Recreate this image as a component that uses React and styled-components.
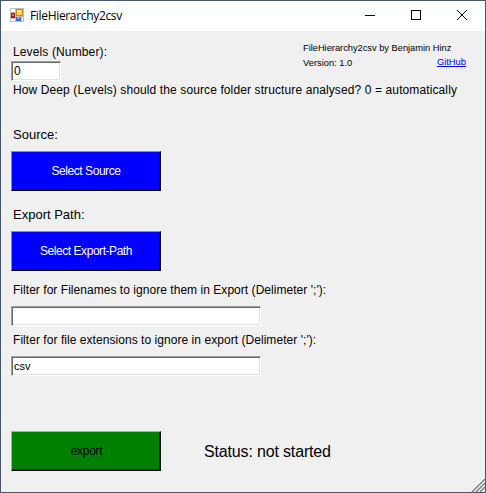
import React from "react";
import styled, { createGlobalStyle } from "styled-components";

const GlobalStyle = createGlobalStyle`
  * { box-sizing: border-box; }
  body { margin: 0; background: #f0f0f0; font-family: "Liberation Sans", Arial, sans-serif; }
`;

const Window = styled.div`
  width: 486px;
  height: 493px;
  display: flex;
  flex-direction: column;
  border: 1px solid #43586c;
  background: #f0f0f0;
  color: #000;
  overflow: hidden;
`;

const TitleBar = styled.header`
  flex: none;
  height: 30px;
  display: flex;
  align-items: center;
  padding-left: 9px;
  background: #fff;
`;

const Logo = styled.svg`
  flex: none;
  margin-bottom: 2px;
`;

const Title = styled.h1`
  flex: 1;
  margin: 0 0 0 6px;
  font: 400 12px/16px "Open Sans", "Noto Sans", sans-serif;
  letter-spacing: -0.33px;
  white-space: nowrap;
`;

const Caption = styled.button`
  width: 46px;
  height: 30px;
  padding: 0 0 2px;
  border: 0;
  background: transparent;
  display: grid;
  place-items: center;
`;

const Form = styled.main`
  flex: 1;
  display: flex;
  flex-direction: column;
  align-items: flex-start;
  padding-left: 10px;
`;

const Header = styled.div`
  width: 100%;
  height: 50px;
  display: flex;
  justify-content: space-between;
`;

const Levels = styled.div`
  padding-top: 12px;
`;

const Label = styled.label`
  display: block;
  margin-top: ${(p) => p.$gap || 0}px;
  padding-left: 2px;
  font-size: ${(p) => p.$size || 12}px;
  line-height: 18px;
  letter-spacing: ${(p) => p.$track || 0}px;
  white-space: nowrap;
`;

const Credits = styled.div`
  width: 182px;
  padding-top: 10px;
  font-size: 9.33px;
  line-height: 15px;
  white-space: nowrap;
`;

const CreditLine = styled.div`
  display: flex;
  justify-content: space-between;
  width: 163px;
  letter-spacing: ${(p) => p.$track || 0}px;
`;

const Link = styled.a`
  color: #00f;
  line-height: 13px;
  text-decoration: underline;
`;

const Field = styled.input`
  display: block;
  width: ${(p) => p.$width}px;
  height: 20px;
  margin-top: ${(p) => p.$gap || 0}px;
  padding: 0 0 0 2px;
  border: 1px solid;
  border-color: #a0a0a0 #fff #fff #a0a0a0;
  border-radius: 0;
  outline: 0;
  background: #fff;
  box-shadow: inset 1px 1px #696969, inset -1px -1px #e3e3e3;
  color: #000;
  font-family: "Liberation Sans", Arial, sans-serif;
  font-size: ${(p) => p.$size || 11}px;
`;

const PushButton = styled.button`
  width: 150px;
  height: 40px;
  margin-top: ${(p) => p.$gap || 0}px;
  padding: 0 0 1px ${(p) => p.$indent || 0}px;
  border: 1px solid;
  border-color: ${(p) => p.$light} #000 #000 ${(p) => p.$light};
  border-radius: 0;
  background: ${(p) => p.$face};
  box-shadow: inset -1px -1px ${(p) => p.$shade};
  color: ${(p) => p.$ink};
  font: 12px "Liberation Sans", Arial, sans-serif;
  letter-spacing: ${(p) => p.$track || 0}px;
`;

const Footer = styled.div`
  display: flex;
  align-items: center;
  height: 40px;
  margin-top: 55px;
`;

const Status = styled.output`
  margin-left: 43px;
  padding-top: 2px;
  font-size: 16px;
  line-height: 20px;
  letter-spacing: -0.16px;
  white-space: nowrap;
`;

const Grip = styled.svg`
  position: absolute;
  left: 471px;
  top: 478px;
`;

function AppIcon() {
  return (
    <Logo width="14" height="14" viewBox="0 0 14 14" shapeRendering="crispEdges">
      <rect width="14" height="14" fill="#bdbdbd" />
      <path d="M1 1h4v3H1zM1 11h4v2H1zM12 9h1v4h-1z" fill="#fff" />
      <rect x="1" y="5" width="4" height="5" fill="#a81616" />
      <rect x="2" y="6" width="2" height="2" fill="#e07868" />
      <rect x="6" y="1" width="7" height="7" fill="#c58c08" />
      <rect x="7" y="2" width="5" height="5" fill="#ffd45a" />
      <rect x="7" y="2" width="3" height="2" fill="#ffeaa0" />
      <rect x="6" y="9" width="5" height="4" fill="#3568c8" />
      <rect x="7" y="9" width="3" height="2" fill="#78a8f0" />
    </Logo>
  );
}

function CaptionIcon({ d, crisp }) {
  return (
    <svg width="12" height="12" viewBox="0 0 12 12" shapeRendering={crisp ? "crispEdges" : "auto"}>
      <path d={d} fill="none" stroke="#000" />
    </svg>
  );
}

function SizeGrip() {
  return (
    <Grip width="14" height="14" viewBox="0 0 14 14">
      <path d="M0 13L13 0M4 13L13 4M8 13L13 8" stroke="#fff" strokeWidth="1" />
      <path d="M1 14L14 1M5 14L14 5M9 14L14 9" stroke="#808080" strokeWidth="1.5" />
    </Grip>
  );
}

export default function App() {
  const blue = { $face: "#0000ff", $light: "#8080ff", $shade: "#000080", $ink: "#fff", $track: -0.45 };
  const green = { $face: "#008000", $light: "#40ff40", $shade: "#004000", $ink: "#000", $track: -0.3, $indent: 1 };
  return (
    <>
      <GlobalStyle />
      <Window>
        <TitleBar>
          <AppIcon />
          <Title>FileHierarchy2csv</Title>
          <Caption aria-label="Minimize"><CaptionIcon crisp d="M1 6.5h10" /></Caption>
          <Caption aria-label="Maximize"><CaptionIcon crisp d="M1.5 1.5h9v9h-9z" /></Caption>
          <Caption aria-label="Close"><CaptionIcon d="M1 1l10 10M11 1L1 11" /></Caption>
        </TitleBar>
        <Form>
          <Header>
            <Levels>
              <Label htmlFor="levels" $track={0.13}>Levels (Number):</Label>
              <Field id="levels" $width={50} $size={12} defaultValue="0" />
            </Levels>
            <Credits>
              <CreditLine $track={-0.03}>FileHierarchy2csv by Benjamin Hinz</CreditLine>
              <CreditLine>
                Version: 1.0
                <Link href="#">GitHub</Link>
              </CreditLine>
            </Credits>
          </Header>
          <Label as="span" $track={0.11}>How Deep (Levels) should the source folder structure analysed? 0 = automatically</Label>
          <Label as="span" $gap={27} $size={13}>Source:</Label>
          <PushButton {...blue} $gap={7}>Select Source</PushButton>
          <Label as="span" $gap={15} $size={13}>Export Path:</Label>
          <PushButton {...blue} $gap={7}>Select Export-Path</PushButton>
          <Label htmlFor="names" $gap={10} $track={0.04}>Filter for Filenames to ignore them in Export (Delimeter ';'):</Label>
          <Field id="names" $width={250} $gap={7} />
          <Label htmlFor="ext" $gap={5} $track={0.05}>Filter for file extensions to ignore in export (Delimeter ';'):</Label>
          <Field id="ext" $width={250} $gap={7} defaultValue="csv" />
          <Footer>
            <PushButton {...green}>export</PushButton>
            <Status>Status: not started</Status>
          </Footer>
        </Form>
        <SizeGrip />
      </Window>
    </>
  );
}
